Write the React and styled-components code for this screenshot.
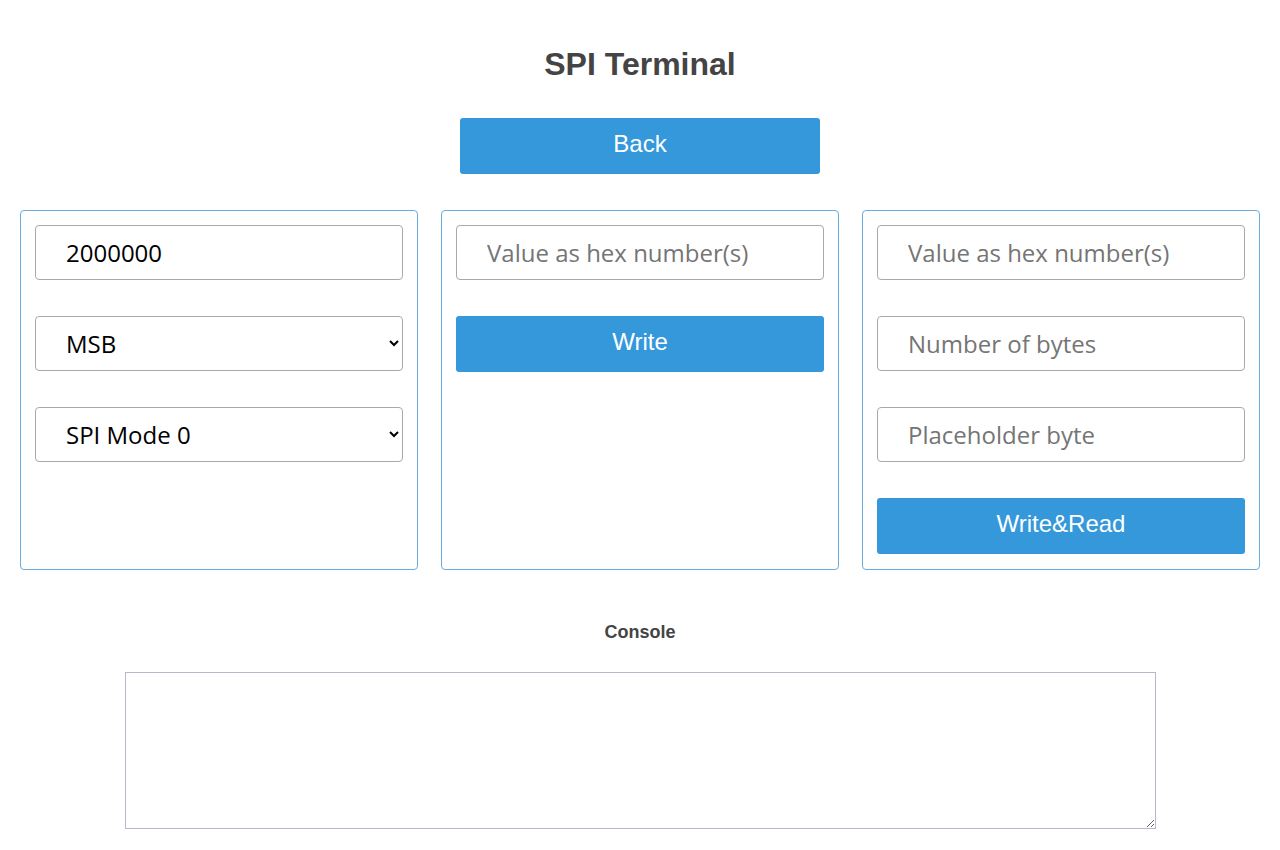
import React from 'react';
import styled, { createGlobalStyle } from 'styled-components';

const GlobalStyle = createGlobalStyle`
  body {
    margin: 0;
    background: #fff;
    font-family: 'Liberation Sans', Arial, sans-serif;
  }
`;

const Page = styled.main`
  padding: 0 20px;
  display: flex;
  flex-direction: column;
  align-items: center;
`;

const Title = styled.h1`
  margin: 44px 0 0;
  font-size: 32px;
  line-height: 40px;
  font-weight: bold;
  color: #444;
`;

const Button = styled.button`
  display: block;
  width: ${(p) => p.width || '100%'};
  height: 56px;
  padding: 0 0 5px;
  border: none;
  border-radius: 3px;
  background: #3498db;
  color: #fff;
  font-family: 'Liberation Sans', Arial, sans-serif;
  font-size: 24px;
  cursor: pointer;
`;

const BackButton = styled(Button)`
  margin-top: 34px;
`;

const Panels = styled.section`
  margin-top: 36px;
  width: 100%;
  display: grid;
  grid-template-columns: repeat(3, 1fr);
  gap: 23px;
`;

const Panel = styled.div`
  border: 1px solid #6aaee0;
  border-radius: 4px;
  padding: 14px 14px 15px;
  height: 360px;
  box-sizing: border-box;
  display: flex;
  flex-direction: column;
  gap: 36px;
`;

const fieldCss = `
  box-sizing: border-box;
  width: 100%;
  height: 55px;
  border: 1px solid #a9a9a9;
  border-radius: 4px;
  padding: 0 30px;
  font-family: 'Open Sans', 'Noto Sans', sans-serif;
  font-size: 24px;
  color: #000;
  background: #fff;
  &::placeholder {
    color: #757575;
  }
`;

const Input = styled.input`
  ${fieldCss}
`;

const Select = styled.select`
  ${fieldCss}
  padding: 0 26px;
`;

const ConsoleLabel = styled.h3`
  margin: 50px 0 0;
  font-size: 18px;
  line-height: 24px;
  font-weight: bold;
  color: #444;
`;

const Console = styled.textarea`
  margin-top: 28px;
  width: 1031px;
  height: 157px;
  box-sizing: border-box;
  border: 1px solid #b8b8c8;
  border-radius: 0;
  resize: both;
`;

export default function App() {
  return (
    <>
      <GlobalStyle />
      <Page>
        <Title>SPI Terminal</Title>
        <BackButton width='360px'>Back</BackButton>
        <Panels>
          <Panel>
            <Input defaultValue='2000000' />
            <Select defaultValue='MSB'>
              <option>MSB</option>
              <option>LSB</option>
            </Select>
            <Select defaultValue='SPI Mode 0'>
              <option>SPI Mode 0</option>
              <option>SPI Mode 1</option>
              <option>SPI Mode 2</option>
              <option>SPI Mode 3</option>
            </Select>
          </Panel>
          <Panel>
            <Input placeholder='Value as hex number(s)' />
            <Button>Write</Button>
          </Panel>
          <Panel>
            <Input placeholder='Value as hex number(s)' />
            <Input placeholder='Number of bytes' />
            <Input placeholder='Placeholder byte' />
            <Button>Write&amp;Read</Button>
          </Panel>
        </Panels>
        <ConsoleLabel>Console</ConsoleLabel>
        <Console />
      </Page>
    </>
  );
}
